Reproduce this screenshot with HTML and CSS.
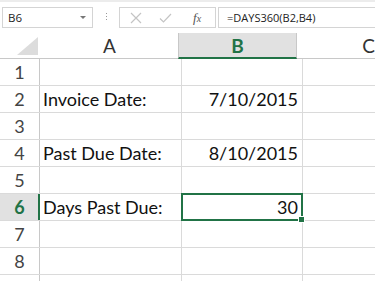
FILE: index.html
```html
<!DOCTYPE html>
<html lang="en">
<head>
  <meta charset="UTF-8">
  <title>DAYS360</title>
  <link rel="stylesheet" href="styles.css">
</head>
<body>
  <div class="formula-bar">
    <div class="name-box">
      <span>B6</span>
      <svg class="caret" width="6" height="4" viewBox="0 0 6 4"><path d="M0 0 L6 0 L3 3 Z" fill="#777"/></svg>
    </div>
    <div class="grip"><i></i><i></i><i></i></div>
    <div class="func-box">
      <svg width="12" height="12" viewBox="0 0 12 12"><path d="M1 1 L11 11 M11 1 L1 11" stroke="#c4c4c4" stroke-width="1.2" fill="none"/></svg>
      <svg width="13" height="12" viewBox="0 0 13 12"><path d="M1 6.5 L4.5 10 L12 2" stroke="#c4c4c4" stroke-width="1.2" fill="none"/></svg>
      <span class="fx">f<small>x</small></span>
    </div>
    <div class="formula">=DAYS360(B2,B4)</div>
  </div>

  <div class="sheet">
    <div class="row head">
      <div class="rh corner">
        <svg width="21" height="18" viewBox="0 0 21 18"><path d="M21 0 L21 18 L0 18 Z" fill="#dcdcdc"/></svg>
      </div>
      <div class="c a">A</div>
      <div class="c b active">B</div>
      <div class="c rest">C</div>
    </div>
    <div class="row"><div class="rh">1</div><div class="c a"></div><div class="c b"></div><div class="c rest"></div></div>
    <div class="row"><div class="rh">2</div><div class="c a">Invoice Date:</div><div class="c b num">7/10/2015</div><div class="c rest"></div></div>
    <div class="row"><div class="rh">3</div><div class="c a"></div><div class="c b"></div><div class="c rest"></div></div>
    <div class="row"><div class="rh">4</div><div class="c a">Past Due Date:</div><div class="c b num">8/10/2015</div><div class="c rest"></div></div>
    <div class="row"><div class="rh">5</div><div class="c a"></div><div class="c b"></div><div class="c rest"></div></div>
    <div class="row"><div class="rh active">6</div><div class="c a">Days Past Due:</div><div class="c b num selected">30<span class="handle"></span></div><div class="c rest"></div></div>
    <div class="row"><div class="rh">7</div><div class="c a"></div><div class="c b"></div><div class="c rest"></div></div>
    <div class="row"><div class="rh">8</div><div class="c a"></div><div class="c b"></div><div class="c rest"></div></div>
    <div class="row"><div class="rh"></div><div class="c a"></div><div class="c b"></div><div class="c rest"></div></div>
  </div>
</body>
</html>
```

FILE: styles.css
```css
body {
  margin: 0;
  background: #fff;
  font-family: Lato, "Open Sans", sans-serif;
  color: #111;
  overflow: hidden;
}
.formula-bar {
  height: 33px;
  border-top: 2px solid #ececec;
  box-sizing: border-box;
  padding: 5px 0 0 2px;
  display: flex;
  align-items: flex-start;
  font-family: "Open Sans", sans-serif;
  font-size: 11px;
  color: #222;
}
.name-box {
  width: 91px;
  height: 21px;
  box-sizing: border-box;
  border: 1px solid #d4d4d4;
  display: flex;
  align-items: center;
  justify-content: space-between;
  padding: 0 6px 0 5px;
  font-size: 11.5px;
}
.caret {
  margin-top: 1px;
}
.grip {
  width: 26px;
  display: flex;
  flex-direction: column;
  align-items: center;
  gap: 2px;
  padding-top: 6px;
}
.grip i {
  width: 1px;
  height: 1px;
  background: #999;
}
.func-box {
  width: 97px;
  height: 21px;
  box-sizing: border-box;
  border: 1px solid #d4d4d4;
  display: flex;
  align-items: center;
  padding-left: 10px;
  gap: 17px;
}
.fx {
  font-family: "Liberation Serif", serif;
  font-style: italic;
  font-size: 13px;
  color: #555;
  margin-left: 4px;
}
.fx small {
  font-size: 10px;
}
.formula {
  flex: 1;
  height: 21px;
  box-sizing: border-box;
  border: 1px solid #d4d4d4;
  border-right: none;
  margin-left: 2px;
  padding: 2px 0 0 8px;
}
.row {
  display: flex;
  height: 27px;
  box-sizing: border-box;
  border-bottom: 1px solid #dadada;
}
.rh {
  width: 40px;
  flex: none;
  box-sizing: border-box;
  border-right: 1px solid #c8c8c8;
  text-align: center;
  font-size: 18px;
  line-height: 26px;
  color: #444;
}
.rh.active {
  background: #e1e1e1;
  border-right: 2px solid #217346;
  color: #217346;
  font-weight: bold;
  padding-left: 1px;
}
.c {
  box-sizing: border-box;
  border-right: 1px solid #dadada;
  font-size: 18px;
  line-height: 26px;
  padding: 0 4px 0 3px;
  white-space: nowrap;
}
.c.a {
  width: 142px;
}
.c.b {
  width: 121px;
}
.c.rest {
  flex: 1;
  border-right: none;
}
.num {
  text-align: right;
}
.selected {
  position: relative;
}
.selected::after {
  content: "";
  position: absolute;
  left: -1px;
  top: -1px;
  right: -1px;
  bottom: -1px;
  border: 2px solid #217346;
}
.handle {
  position: absolute;
  right: -3px;
  bottom: -3px;
  width: 5px;
  height: 5px;
  background: #217346;
  border: 1px solid #fff;
  z-index: 1;
}
.head {
  height: 26px;
  border-bottom: 1px solid #c8c8c8;
}
.head .rh,
.head .c {
  border-right: none;
  text-align: center;
  font-size: 19px;
  line-height: 25px;
  color: #333;
  padding: 0;
}
.head .corner {
  display: flex;
  justify-content: flex-end;
  align-items: flex-end;
  padding: 0 2px 3px 0;
}
.head .c.active {
  background: #e1e1e1;
  border-left: 1px solid #c8c8c8;
  border-right: 1px solid #c8c8c8;
  border-bottom: 2px solid #217346;
  margin-bottom: -1px;
  color: #217346;
  font-weight: bold;
  width: 122px;
  margin-left: -1px;
}
.head .c.rest {
  text-align: left;
  padding-left: 65px;
}
```
